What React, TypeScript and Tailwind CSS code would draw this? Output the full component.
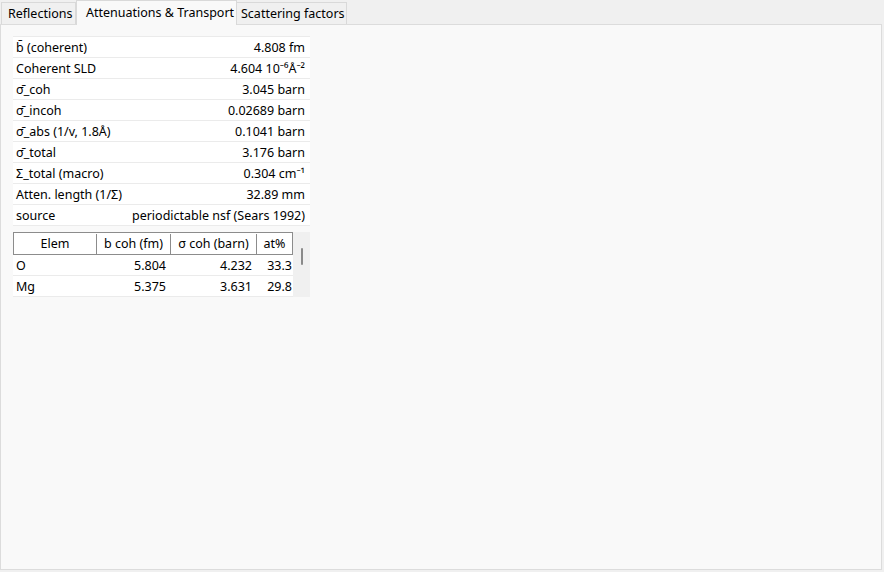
const props: [string, string][] = [
  ['b\u0304 (coherent)', '4.808 fm'],
  ['Coherent SLD', '4.604 10\u207B\u2076\u00C5\u207B\u00B2'],
  ['\u03C3\u0304_coh', '3.045 barn'],
  ['\u03C3\u0304_incoh', '0.02689 barn'],
  ['\u03C3\u0304_abs (1/v, 1.8\u00C5)', '0.1041 barn'],
  ['\u03C3\u0304_total', '3.176 barn'],
  ['\u03A3_total (macro)', '0.304 cm\u207B\u00B9'],
  ['Atten. length (1/\u03A3)', '32.89 mm'],
  ['source', 'periodictable nsf (Sears 1992)'],
];

const elems = [
  { el: 'O', b: '5.804', s: '4.232', at: '33.3' },
  { el: 'Mg', b: '5.375', s: '3.631', at: '29.8' },
];

export default function App() {
  return (
    <div
      className="flex h-[572px] w-[884px] flex-col bg-[#f0f0f0] text-[12.5px] text-black"
      style={{ fontFamily: '"Noto Sans", "Open Sans", sans-serif' }}
    >
      <div className="flex items-end whitespace-nowrap pl-px">
        <div className="mt-[2px] flex h-[22px] w-[75px] items-center border border-b-0 border-[#d9d9d9] bg-[#f0f0f0] pl-[6px] pt-px">
          Reflections
        </div>
        <div className="relative z-10 -mb-px flex h-[25px] w-[161px] items-center border border-b-0 border-[#d9d9d9] bg-[#f9f9f9] pl-[9px]">
          Attenuations &amp; Transport
        </div>
        <div className="mt-[2px] flex h-[22px] w-[110px] items-center border border-b-0 border-l-0 border-[#d9d9d9] bg-[#f0f0f0] pl-[4px] pt-px">
          Scattering factors
        </div>
      </div>
      <div className="mb-[2px] mr-[2px] flex-1 border border-[#dcdcdc] bg-[#f9f9f9] pl-[12px] pt-[11px]">
        <div className="w-[297px] border-t border-[#ebebeb]">
          {props.map(([k, v]) => (
            <div key={k} className="flex h-[21px] items-center justify-between border-b border-[#ebebeb] bg-white pl-[3px] pr-[5px] pt-[2px]">
              <span>{k}</span>
              <span>{v}</span>
            </div>
          ))}
        </div>
        <div className="mt-[6px] flex w-[297px]">
          <div className="w-[280px]">
            <div className="flex h-[23px] border border-[#8c8c8c] bg-white pt-px">
              <div className="flex w-[83px] items-center justify-center border-r border-[#8c8c8c]">Elem</div>
              <div className="flex w-[74px] items-center justify-center border-r border-[#8c8c8c]">b coh (fm)</div>
              <div className="flex w-[86px] items-center justify-center border-r border-[#8c8c8c]">{'\u03C3 coh (barn)'}</div>
              <div className="flex flex-1 items-center justify-center">at%</div>
            </div>
            {elems.map((r) => (
              <div key={r.el} className="flex h-[21px] items-center border-b border-[#ebebeb] bg-white pt-[2px]">
                <div className="w-[84px] pl-[3px]">{r.el}</div>
                <div className="w-[74px] pr-[5px] text-right">{r.b}</div>
                <div className="w-[86px] pr-[5px] text-right">{r.s}</div>
                <div className="flex-1 pr-[1px] text-right">{r.at}</div>
              </div>
            ))}
          </div>
          <div className="flex w-[17px] justify-center bg-[#f0f0f0] pt-[16px]">
            <div className="h-[17px] w-[2px] rounded bg-[#8a8a8a]" />
          </div>
        </div>
      </div>
    </div>
  );
}
